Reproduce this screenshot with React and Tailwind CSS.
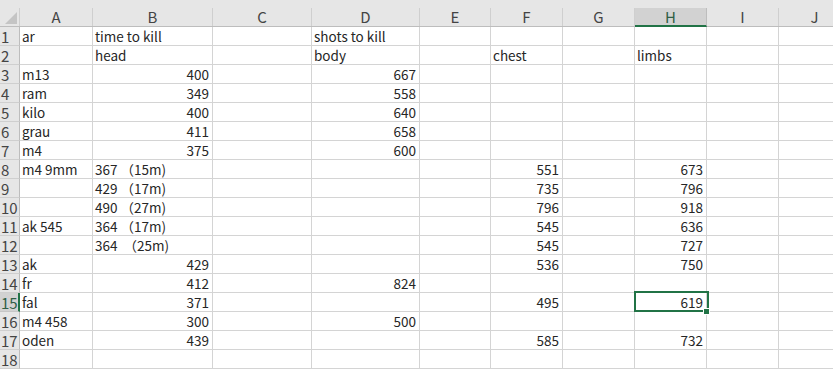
const cols = [
  { k: 'A', w: 73 },
  { k: 'B', w: 120 },
  { k: 'C', w: 99 },
  { k: 'D', w: 108 },
  { k: 'E', w: 71 },
  { k: 'F', w: 72 },
  { k: 'G', w: 72 },
  { k: 'H', w: 72 },
  { k: 'I', w: 72 },
  { k: 'J', w: 72 },
];

// cell values, numbers are right aligned
const rows = [
  { A: 'ar', B: 'time to kill', D: 'shots to kill' },
  { B: 'head', D: 'body', F: 'chest', H: 'limbs' },
  { A: 'm13', B: 400, D: 667 },
  { A: 'ram', B: 349, D: 558 },
  { A: 'kilo', B: 400, D: 640 },
  { A: 'grau', B: 411, D: 658 },
  { A: 'm4', B: 375, D: 600 },
  { A: 'm4 9mm', B: '367 （15m)', F: 551, H: 673 },
  { B: '429 （17m)', F: 735, H: 796 },
  { B: '490 （27m)', F: 796, H: 918 },
  { A: 'ak 545', B: '364 （17m)', F: 545, H: 636 },
  { B: '364  （25m)', F: 545, H: 727 },
  { A: 'ak', B: 429, F: 536, H: 750 },
  { A: 'fr', B: 412, D: 824 },
  { A: 'fal', B: 371, F: 495, H: 619 },
  { A: 'm4 458', B: 300, D: 500 },
  { A: 'oden', B: 439, F: 585, H: 732 },
  {},
];

const font = { fontFamily: '"Noto Sans CJK SC", "Noto Sans", sans-serif' };

export default function App() {
  return (
    <div className="w-[833px] h-[369px] overflow-hidden bg-white text-[#262626] text-[13.5px]" style={font}>
      {/* column headers */}
      <div className="flex h-[27px] bg-[#e6e6e6] border-b border-[#bdbdbd]">
        <div className="relative w-[20px] shrink-0 border-r border-[#cfcfcf] mt-[8px]">
          <div className="absolute right-[2px] bottom-[2px] w-0 h-0 border-l-[12px] border-l-transparent border-b-[12px] border-b-[#c4c4c4]" />
        </div>
        {cols.map((c) => (
          <div
            key={c.k}
            style={{ width: c.w }}
            className={
              c.k === 'H'
                ? 'shrink-0 flex items-center justify-center pt-[1px] text-[15px] text-[#2f5e45] bg-[#d2d2d2] border-r border-[#bdbdbd] border-b-2 border-b-[#217346] -mb-px mt-[8px]'
                : 'shrink-0 flex items-center justify-center pt-[1px] text-[15px] text-[#444] border-r border-[#cfcfcf] mt-[8px]'
            }
          >
            {c.k}
          </div>
        ))}
      </div>

      {rows.map((r, i) => {
        const n = i + 1;
        const sel = n === 15;
        return (
          <div key={n} className="flex h-[19px]">
            <div
              className={
                sel
                  ? 'w-[20px] shrink-0 bg-[#d2d2d2] border-r-2 border-[#217346] border-b border-b-[#c6c6c6] text-[15px] leading-[17px] pt-px pl-[1px] text-[#2f5e45]'
                  : 'w-[20px] shrink-0 bg-[#e6e6e6] border-r border-[#bdbdbd] border-b border-b-[#cfcfcf] text-[15px] leading-[17px] pt-px pl-[1px] text-[#444]'
              }
            >
              {n}
            </div>
            {cols.map((c) => {
              const v = r[c.k];
              const num = typeof v === 'number';
              const active = sel && c.k === 'H';
              return (
                <div
                  key={c.k}
                  style={{ width: c.w }}
                  className={
                    'relative shrink-0 border-r border-b border-[#d4d4d4] leading-[17px] pt-px whitespace-pre ' +
                    (num ? 'text-right pr-[3px]' : 'text-left pl-[2px]')
                  }
                >
                  {v}
                  {active && (
                    <>
                      <div className="absolute z-10 -left-[1px] -top-[2px] w-[75px] h-[21px] border-2 border-[#217346]" />
                      <div className="absolute z-20 -right-[4px] -bottom-[4px] w-[7px] h-[7px] bg-[#217346] border border-white" />
                    </>
                  )}
                </div>
              );
            })}
          </div>
        );
      })}
    </div>
  );
}
